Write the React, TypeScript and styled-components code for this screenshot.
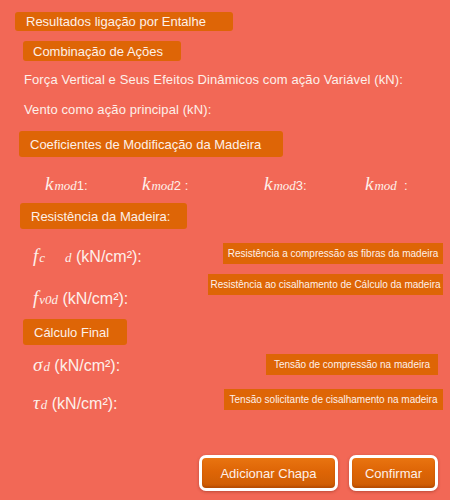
import React from 'react';
import styled, { createGlobalStyle } from 'styled-components';

const GlobalStyle = createGlobalStyle`
  html, body {
    margin: 0;
    padding: 0;
    background: #f26856;
  }
  body {
    font-family: "Liberation Sans", Arial, sans-serif;
    color: #ffffff;
  }
`;

const Page = styled.div`
  width: 450px;
  height: 500px;
  box-sizing: border-box;
  background: #f26856;
  padding-top: 12px;
  display: flex;
  flex-direction: column;
  overflow: hidden;
`;

const Tag = styled.div<{ $left: number; $width: number; $height: number; $top?: number; $pad?: number }>`
  margin-left: ${(p) => p.$left}px;
  margin-top: ${(p) => p.$top ?? 0}px;
  width: ${(p) => p.$width}px;
  height: ${(p) => p.$height}px;
  box-sizing: border-box;
  padding-left: ${(p) => p.$pad ?? 11}px;
  background: #de6506;
  border-radius: 3px;
  display: flex;
  align-items: center;
  font-size: 13px;
  color: #fdf0e8;
  white-space: nowrap;
`;

const Line = styled.div<{ $top: number }>`
  margin-left: 24px;
  margin-top: ${(p) => p.$top}px;
  height: 16px;
  line-height: 16px;
  font-size: 13px;
  letter-spacing: 0.1px;
  color: #fdf0ea;
  white-space: nowrap;
`;

const KRow = styled.div`
  margin-top: 12px;
  height: 30px;
  display: flex;
  align-items: center;
  position: relative;
`;

const KItem = styled.div<{ $left: number }>`
  position: absolute;
  left: ${(p) => p.$left}px;
  display: flex;
  align-items: baseline;
  font-size: 13px;
  color: #fdf0ea;
  white-space: nowrap;
`;

const MathVar = styled.span`
  font-family: "Liberation Serif", "DejaVu Serif", serif;
  font-style: italic;
  font-size: 19px;
`;

const MathSub = styled.sub`
  font-family: "Liberation Serif", "DejaVu Serif", serif;
  font-style: italic;
  font-size: 13px;
  vertical-align: -5px;
  line-height: 0;
  margin-left: 1px;
`;

const ValueRow = styled.div<{ $top: number; $height: number }>`
  margin-top: ${(p) => p.$top}px;
  height: ${(p) => p.$height}px;
  display: flex;
  justify-content: space-between;
`;

const Label = styled.div<{ $labelTop: number }>`
  margin-left: 33px;
  margin-top: ${(p) => p.$labelTop}px;
  display: flex;
  align-items: baseline;
  font-size: 16px;
  color: #fdf0ea;
  white-space: nowrap;
  height: 22px;
`;

const Hint = styled.div<{ $boxTop: number; $width: number; $right: number }>`
  margin-top: ${(p) => p.$boxTop}px;
  margin-right: ${(p) => p.$right}px;
  width: ${(p) => p.$width}px;
  height: 21px;
  box-sizing: border-box;
  background: #de6506;
  display: flex;
  align-items: center;
  justify-content: center;
  font-size: 10px;
  color: #fdf0ea;
  white-space: nowrap;
`;

const Actions = styled.div`
  margin-top: 36px;
  display: flex;
  justify-content: flex-end;
  gap: 11px;
  padding-right: 12px;
`;

const ActionButton = styled.button<{ $width: number }>`
  width: ${(p) => p.$width}px;
  height: 36px;
  box-sizing: border-box;
  border: 3px solid #ffffff;
  border-radius: 7px;
  background: linear-gradient(#e97410 0%, #de6506 45%, #cd5c04 100%);
  box-shadow: 0 1px 3px rgba(120, 40, 20, 0.45), inset 0 -2px 2px rgba(140, 50, 0, 0.35);
  color: #fdf0ea;
  font-family: "Liberation Sans", Arial, sans-serif;
  font-size: 13px;
  padding: 0;
  cursor: pointer;
`;

const Kmod = ({ suffix }: { suffix: React.ReactNode }) => (
  <>
    <MathVar>k</MathVar>
    <MathSub>mod</MathSub>
    {suffix}
  </>
);

export default function App() {
  return (
    <Page>
      <GlobalStyle />
      <Tag $left={15} $width={218} $height={19}>Resultados ligação por Entalhe</Tag>
      <Tag $left={23} $width={158} $height={20} $top={10} $pad={10}>Combinação de Ações</Tag>
      <Line $top={11}>Força Vertical e Seus Efeitos Dinâmicos com ação Variável (kN):</Line>
      <Line $top={14}>Vento como ação principal (kN):</Line>
      <Tag $left={19} $width={264} $height={26} $top={13}>Coeficientes de Modificação da Madeira</Tag>

      <KRow>
        <KItem $left={45}><Kmod suffix="1:" /></KItem>
        <KItem $left={142}><Kmod suffix=" 2 :" /></KItem>
        <KItem $left={264}><Kmod suffix="3:" /></KItem>
        <KItem $left={365}><Kmod suffix={'\u00a0 :'} /></KItem>
      </KRow>

      <Tag $left={20} $width={167} $height={26} $top={4}>Resistência da Madeira:</Tag>

      <ValueRow $top={14} $height={30}>
        <Label $labelTop={2}>
          <MathVar>f</MathVar>
          <MathSub>c</MathSub>
          <MathSub style={{ marginLeft: 20 }}>d</MathSub>
          &nbsp;(kN/cm²):
        </Label>
        <Hint $boxTop={0} $width={220} $right={7}>Resistência a compressão as fibras da madeira</Hint>
      </ValueRow>

      <ValueRow $top={0} $height={48}>
        <Label $labelTop={14}>
          <MathVar>f</MathVar>
          <MathSub>v0d</MathSub>
          &nbsp;(kN/cm²):
        </Label>
        <Hint $boxTop={1} $width={235} $right={7}>Resistência ao cisalhamento de Cálculo da madeira</Hint>
      </ValueRow>

      <Tag $left={23} $width={104} $height={26} $top={-2}>Cálculo Final</Tag>

      <ValueRow $top={9} $height={35}>
        <Label $labelTop={0}>
          <MathVar>σ</MathVar>
          <MathSub>d</MathSub>
          &nbsp;(kN/cm²):
        </Label>
        <Hint $boxTop={0} $width={172} $right={12}>Tensão de compressão na madeira</Hint>
      </ValueRow>

      <ValueRow $top={0} $height={30}>
        <Label $labelTop={3}>
          <MathVar>τ</MathVar>
          <MathSub>d</MathSub>
          &nbsp;(kN/cm²):
        </Label>
        <Hint $boxTop={0} $width={219} $right={7}>Tensão solicitante de cisalhamento na madeira</Hint>
      </ValueRow>

      <Actions>
        <ActionButton $width={139}>Adicionar Chapa</ActionButton>
        <ActionButton $width={89}>Confirmar</ActionButton>
      </Actions>
    </Page>
  );
}
